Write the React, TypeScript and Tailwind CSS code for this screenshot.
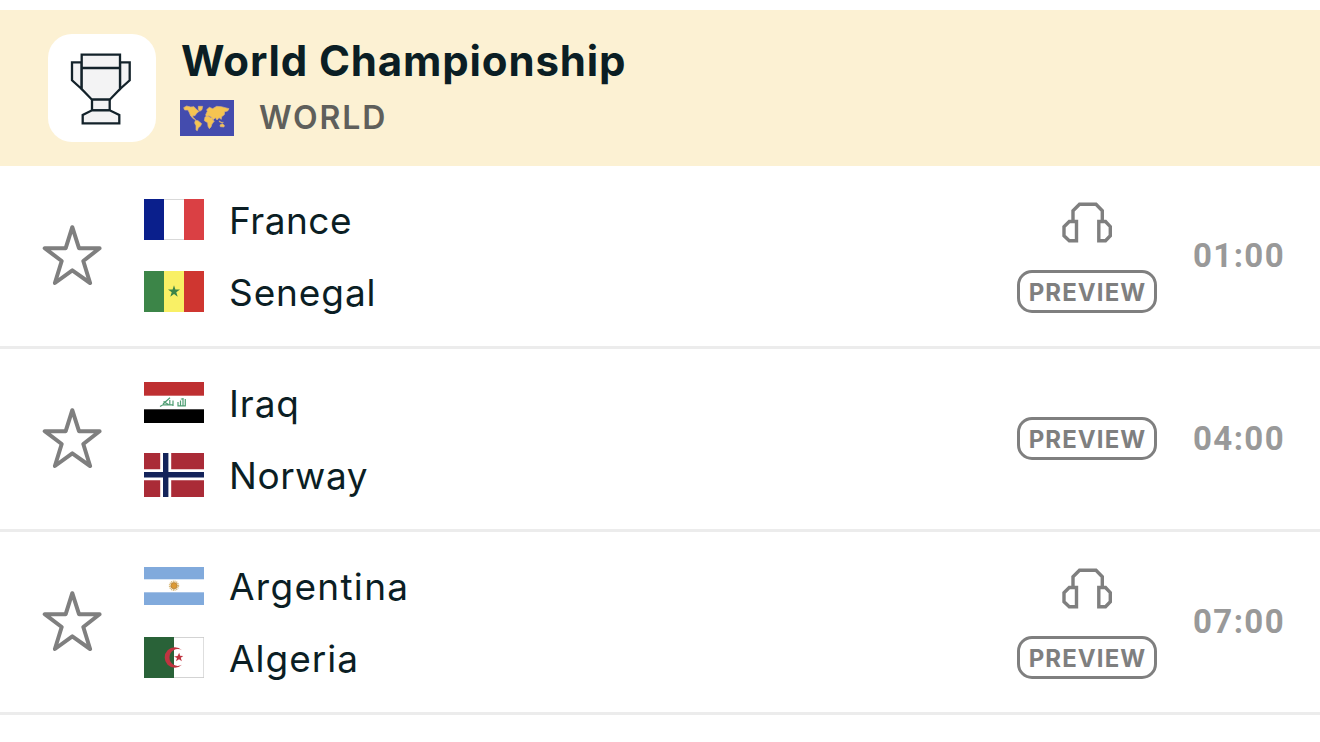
import React from 'react';

type FlagName = 'france' | 'senegal' | 'iraq' | 'norway' | 'argentina' | 'algeria';

interface Team {
  name: string;
  flag: FlagName;
  tracking: string;
}

interface Match {
  id: number;
  teams: Team[];
  time: string;
  audio: boolean;
}

const matches: Match[] = [
  {
    id: 1,
    teams: [
      { name: 'France', flag: 'france', tracking: 'tracking-[0.5px]' },
      { name: 'Senegal', flag: 'senegal', tracking: 'tracking-[0.9px]' },
    ],
    time: '01:00',
    audio: true,
  },
  {
    id: 2,
    teams: [
      { name: 'Iraq', flag: 'iraq', tracking: 'tracking-[0.9px]' },
      { name: 'Norway', flag: 'norway', tracking: 'tracking-[0.6px]' },
    ],
    time: '04:00',
    audio: false,
  },
  {
    id: 3,
    teams: [
      { name: 'Argentina', flag: 'argentina', tracking: 'tracking-[1.3px]' },
      { name: 'Algeria', flag: 'algeria', tracking: 'tracking-[1px]' },
    ],
    time: '07:00',
    audio: true,
  },
];

const flags: Record<FlagName, React.ReactNode> = {
  france: (
    <svg className="mb-px" width="60" height="41" viewBox="0 0 60 41">
      <rect width="60" height="41" fill="#d9d9d9" />
      <rect y="1" width="60" height="39" fill="#fff" />
      <rect width="20" height="41" fill="#0a1f8c" />
      <rect x="40" width="20" height="41" fill="#da4044" />
    </svg>
  ),
  senegal: (
    <svg className="mb-px" width="60" height="41" viewBox="0 0 60 41">
      <rect width="20" height="41" fill="#3c8548" />
      <rect x="20" width="20" height="41" fill="#f9f065" />
      <rect x="40" width="20" height="41" fill="#cf3630" />
      <path d="M30 14.3L31.4 18.6H36L32.3 21.3L33.7 25.8L30 23.1L26.3 25.8L27.7 21.3L24 18.6H28.6Z" fill="#3c8548" />
    </svg>
  ),
  iraq: (
    <svg className="mb-px" width="60" height="41" viewBox="0 0 60 41">
      <rect width="60" height="41" fill="#fff" />
      <rect width="60" height="13.7" fill="#be2f31" />
      <rect y="27.3" width="60" height="13.7" fill="#000" />
      <g fill="none" stroke="#4f9e73" strokeWidth="1.2">
        <path d="M16 24.5L19 22.8H29.5M19 22L26 15.8M19.5 19.5L24.5 22.5M25.8 18V22.8M29 18.5V24" />
        <path d="M34 20V23.8H41.8M36.5 18.5V23.5M39 16V23.5M41.3 17V24M36.8 17H39.5" />
      </g>
    </svg>
  ),
  norway: (
    <svg width="60" height="44" viewBox="0 0 60 44">
      <rect width="60" height="44" fill="#aa2b37" />
      <path d="M21.7 0V44M0 21.8H60" stroke="#fff" strokeWidth="11" />
      <path d="M21.7 0V44M0 21.8H60" stroke="#13235a" strokeWidth="5.4" />
    </svg>
  ),
  argentina: (
    <svg width="60" height="38" viewBox="0 0 60 38">
      <rect width="60" height="38" fill="#81aadc" />
      <rect y="12.3" width="60" height="13" fill="#fff" />
      <circle cx="30" cy="18.7" r="4.2" fill="none" stroke="#d9b877" strokeWidth="2" strokeDasharray="1 0.65" />
      <circle cx="30" cy="18.7" r="3.1" fill="#dc9a35" stroke="#a87832" strokeWidth="0.6" />
    </svg>
  ),
  algeria: (
    <svg className="mb-px" width="60" height="41" viewBox="0 0 60 41">
      <rect width="60" height="41" fill="#c9c9c9" />
      <rect x="30" y="0.8" width="29.4" height="39.4" fill="#fff" />
      <rect width="30" height="41" fill="#296238" />
      <path d="M38 13.2A10.2 10.2 0 1 0 38 27.8A8.4 8.4 0 1 1 38 13.2Z" fill="#bf3440" />
      <path d="M35.2 15.8L36.1 18.8L39.3 18.9L36.8 20.8L37.8 24.3L35 22.3L32 24.3L33 20.9L30 19.4L33.6 18.9Z" fill="#bf3440" />
    </svg>
  ),
};

const TrophyIcon: React.FC = () => (
  <svg width="108" height="108" viewBox="0 0 108 108" fill="#f3f3f4" stroke="#13222a" strokeWidth="2.3">
    <path d="M33.7 28.3H24V46.3L33.7 55Z" />
    <path d="M72 28.3H81.7V46.3L72 55Z" />
    <path d="M33.7 20.7H72V55L61.7 65.7H44L33.7 55Z" />
    <path d="M33.7 34H72" />
    <path d="M44 65.7H61.7V76.3H44Z" />
    <path d="M44 76.3H61.7L71.3 81V89.3H34.7V81Z" />
  </svg>
);

const WorldFlag: React.FC = () => (
  <svg width="54" height="36" viewBox="0 0 162 108">
    <rect width="162" height="108" fill="#444cae" />
    <g fill="#f5c451" stroke="#d6b184" strokeWidth="2" strokeLinejoin="round">
      <path d="M11 23L20 18L32 21L42 20L48 27L57 34L50 40L45 47L38 47L40 53L47 59L40 56L32 48L28 38L24 30L14 30Z" />
      <path d="M55 19L68 19L66 29L59 34L55 27Z" />
      <path d="M46 61L54 62L65 71L61 79L55 83L52 92L48 90L48 77L44 69Z" />
      <path d="M75 51L84 48L92 53L97 53L99 61L103 63L96 72L93 81L88 86L84 79L83 68L73 62Z" />
      <path d="M77 44L82 34L80 29L88 22L98 26L110 19L124 20L147 26L143 33L134 35L133 44L125 50L124 58L117 53L111 60L106 53L100 59L94 51L86 47L79 50Z" />
      <path d="M120 75L127 71L133 76L132 81L121 80Z" />
      <path d="M117 62L124 66L131 67L126 69L118 66Z" strokeWidth="1" />
    </g>
  </svg>
);

const StarIcon: React.FC = () => (
  <svg
    width="60"
    height="61"
    viewBox="0 0 60 61"
    fill="none"
    stroke="#7f7f7f"
    strokeWidth="4"
    strokeLinejoin="round"
  >
    <path d="M30.3 2.2L37 23.2H57.6L41.3 36L48.1 58L30.3 45.4L12.9 58L19.7 36L2.7 23.2H23.7Z" />
  </svg>
);

const HeadphonesIcon: React.FC = () => (
  <svg width="50" height="41" viewBox="0 0 50 41" fill="none" stroke="#7f7f7f" strokeWidth="3.4">
    <path d="M11 19V8.7L17.5 2.3H34L40.3 8.7V19" />
    <path d="M14.5 19.5V38.7H7.3L2 33.7V24.7L7.3 19.5Z" />
    <path d="M36.8 19.5V38.7H43.5L48.3 33.7V24.7L43.5 19.5Z" />
  </svg>
);

const MatchRow: React.FC<{ match: Match }> = ({ match }) => (
  <div className="flex h-[183px] items-center border-b-[3px] border-[#ececec] pl-[42px] pr-[37px]">
    <button className="mb-px shrink-0" aria-label="Add to favourites">
      <StarIcon />
    </button>

    <div className="ml-[42px] flex-1">
      {match.teams.map((team) => (
        <div key={team.name} className="flex h-[72px] items-center">
          <div className="w-[60px] shrink-0">{flags[team.flag]}</div>
          <span className={`ml-[25px] pt-px text-[37px] leading-none text-[#0b1e24] ${team.tracking}`}>
            {team.name}
          </span>
        </div>
      ))}
    </div>

    <div className="flex w-[140px] flex-col items-center gap-[27px]">
      {match.audio && (
        <div className="pt-[2px]">
          <HeadphonesIcon />
        </div>
      )}
      <div
        className={`flex h-[43px] w-[140px] items-center justify-center rounded-[15px] border-[3px] border-[#7f7f7f] pl-px pt-[3px] text-[24px] font-bold leading-none tracking-[1.1px] text-[#7f7f7f] ${
          match.audio ? '' : 'mb-[2px]'
        }`}
      >
        PREVIEW
      </div>
    </div>

    <div className="ml-[36px] w-[90px] whitespace-nowrap pb-px font-['Roboto',sans-serif] text-[33px] font-bold leading-none tracking-[1.4px] text-[#999999]">
      {match.time}
    </div>
  </div>
);

const App: React.FC = () => {
  return (
    <div className="h-[742px] w-[1320px] overflow-hidden bg-white pt-[10px] font-['Inter',sans-serif]">
      {/* League header */}
      <header className="flex h-[156px] items-center bg-[#fcf1d3] pl-12">
        <div className="size-[108px] shrink-0 rounded-[24px] bg-white">
          <TrophyIcon />
        </div>
        <div className="mb-[5px] ml-[24px] flex flex-col">
          <h1 className="pl-px text-[42px] font-bold leading-[50px] tracking-[0.85px] text-[#0b1e24]">
            World Championship
          </h1>
          <div className="mt-[14px] flex h-9 items-center">
            <WorldFlag />
            <span className="ml-[25px] text-[32px] font-semibold leading-none tracking-[1.9px] text-[#5f5f5b]">
              WORLD
            </span>
          </div>
        </div>
      </header>

      {/* Matches */}
      <main>
        {matches.map((match) => (
          <MatchRow key={match.id} match={match} />
        ))}
      </main>
    </div>
  );
};

export default App;
